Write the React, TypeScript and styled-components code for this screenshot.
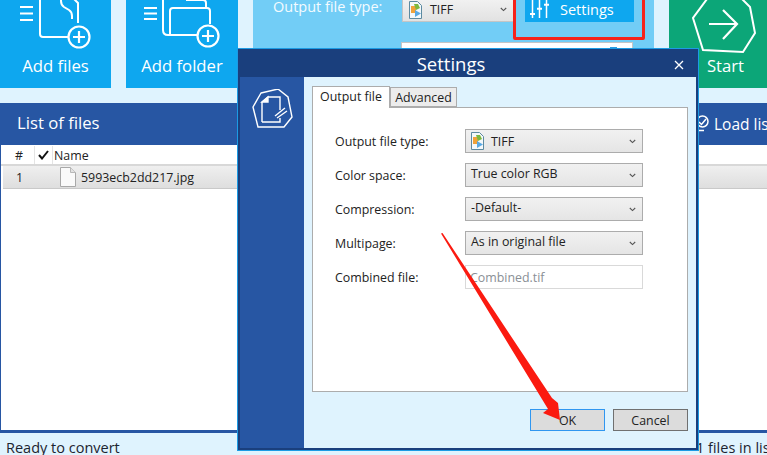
import React from "react";
import styled, { createGlobalStyle } from "styled-components";

const Global = createGlobalStyle`
  html, body { margin: 0; padding: 0; width: 767px; height: 455px; overflow: hidden; background: #dff3fe; }
  * { box-sizing: border-box; }
  body { font-family: "Open Sans", "Noto Sans", "Liberation Sans", sans-serif; }
`;
const Page = styled.div`
  position: relative; width: 767px; height: 455px; overflow: hidden;
  display: flex; flex-direction: column; background: #dff3fe;
`;
const Toolbar = styled.div`display: flex; height: 103px; flex: none;`;
const Tile = styled.div<{ $w: number; $bg: string; $ml: number; $pl?: number }>`
  width: ${p => p.$w}px; margin-left: ${p => p.$ml}px; height: 88px; background: ${p => p.$bg};
  color: #fff; font-size: 16.7px; display: flex; flex-direction: column; align-items: center;
  justify-content: flex-end; padding-bottom: 11px; padding-left: ${p => p.$pl ?? 0}px; position: relative; overflow: hidden;
`;
const TileIcon = styled.svg`position: absolute; left: 0; top: 0;`;
const OutputPanel = styled.div`
  width: 401px; margin-left: 15px; background: #72cdf6; display: flex; flex-direction: column;
  padding-left: 20px; color: #fff; font-size: 14.5px; position: relative;
`;
const OutputRow = styled.div`display: flex; align-items: flex-start; height: 42px;`;
const OutputLabel = styled.div`width: 129px; margin-top: -3px; color: #f4fbff;`;
const TopCombo = styled.div`
  width: 112px; height: 25px; margin-top: -3px; border: 1px solid #c5c5c5; background: linear-gradient(#f2f2f2,#e2e2e2);
  color: #222; font-size: 12.4px; display: flex; align-items: center; padding-left: 6px; gap: 8px;
`;
const Chevron = styled.svg`margin-left: auto; margin-right: 6px; flex: none;`;
const SettingsButton = styled.div`
  width: 109px; height: 26px; margin-top: -4px; margin-left: 11px; background: #0ea7ef; color: #fff; font-size: 14.5px;
  display: flex; align-items: center; padding-left: 5px; gap: 8px;
`;
const WideCombo = styled.div`width: 232px; height: 30px; margin-left: 128px; background: #fff; border: 1px solid #c5c5c5; position: relative;`;
const ComboMark = styled.span`position: absolute; left: 208px; top: 4px; width: 7px; height: 2px; background: #2d9be0;`;
const RedFrame = styled.div`
  position: absolute; left: 260px; top: -3px; width: 132px; height: 43px;
  border: 3px solid #f5231b; border-radius: 2px;
`;
const ListBar = styled.div`
  height: 42px; flex: none; background: #2756a3; color: #fff; display: flex; align-items: center;
  padding: 0 0 3px 17px; font-size: 16.7px; justify-content: space-between;
`;
const LoadList = styled.div`display: flex; align-items: center; gap: 4px; font-size: 15.5px; width: 72px; margin-top: 2px; flex: none; white-space: nowrap; overflow: hidden;`;
const Table = styled.div`
  height: 288px; flex: none; background: #fff; border-left: 1px solid #2756a3; border-bottom: 3px solid #2756a3;
  display: flex; flex-direction: column; padding-top: 1px;
`;
const HeaderRow = styled.div`
  height: 20px; flex: none; display: flex; align-items: center; font-size: 12.4px; color: #222;
  border-bottom: 2px solid #d8d8d8;
`;
const HashCell = styled.div`width: 34px; height: 100%; padding-left: 14px; border-right: 1px solid #e4e4e4; display: flex; align-items: center;`;
const CheckCell = styled.div`width: 18px; height: 100%; padding-left: 3px; border-right: 1px solid #e4e4e4; display: flex; align-items: center;`;
const NameCell = styled.div`padding-left: 1px;`;
const FileRow = styled.div`
  height: 23px; flex: none; margin-left: 2px; background: linear-gradient(#efefef,#dedede);
  border-bottom: 1px solid #c9c9c9; display: flex; align-items: center; font-size: 12.4px; color: #222;
`;
const RowNum = styled.div`width: 57px; padding-left: 13px; flex: none;`;
const RowName = styled.div`margin-left: 5px;`;
const StatusBar = styled.div`
  flex: 1; display: flex; justify-content: space-between; font-size: 14.5px; color: #1c2430;
  padding: 5px 0 0 6px; white-space: nowrap;
`;
const StatusRight = styled.div`width: 71px; overflow: hidden; flex: none;`;

const Dialog = styled.div`
  position: absolute; left: 237px; top: 48px; width: 462px; height: 403px;
  border: 1px solid #1c9be4; background: #1a3f7d; padding: 0 2px 2px;
  display: flex; flex-direction: column;
`;
const DialogTitle = styled.div`
  height: 28px; flex: none; background: #1a3f7d; color: #fff; font-size: 18.5px; position: relative;
  display: flex; align-items: center; justify-content: center; padding: 0 34px 0 0; margin: 0 -2px;
`;
const CloseIcon = styled.svg`position: absolute; right: 14px; top: 11px;`;
const DialogBody = styled.div`flex: 1; display: flex; min-height: 0; background: #dff3fe;`;
const Side = styled.div`width: 64px; flex: none; background: #2756a3; padding: 12px 0 0 11px;`;
const Main = styled.div`flex: 1; padding: 8px 8px 0 8px; display: flex; flex-direction: column;`;
const Tabs = styled.div`display: flex; align-items: flex-end; height: 22px; flex: none; position: relative; z-index: 1;`;
const Tab = styled.div<{ $on?: boolean }>`
  height: ${p => p.$on ? 22 : 20}px; width: ${p => p.$on ? 78 : 67}px; justify-content: center; font-size: 12.4px; color: #222;
  background: ${p => p.$on ? "#fff" : "#ececec"}; border: 1px solid #acacac;
  border-bottom: ${p => p.$on ? "none" : "1px solid #acacac"};
  margin-bottom: ${p => p.$on ? -1 : 0}px; padding-bottom: ${p => p.$on ? 3 : 0}px; display: flex; align-items: center; white-space: nowrap;
`;
const TabPanel = styled.div`
  width: 376px; height: 285px; flex: none; background: #fff; border: 1px solid #acacac;
  padding: 21px 0 0 22px; display: flex; flex-direction: column; gap: 10px;
`;
const FormRow = styled.div`display: flex; align-items: center; height: 24px; font-size: 12.4px; color: #222;`;
const FormLabel = styled.div`width: 130px; flex: none;`;
const Combo = styled.div`
  width: 178px; height: 24px; border: 1px solid #acacac; background: linear-gradient(#f1f1f1,#e5e5e5);
  display: flex; align-items: center; padding-left: 5px; gap: 7px; color: #222; font-size: 12.4px;
`;
const ComboText = styled.span`position: relative; top: -2px;`;
const Field = styled.div`
  width: 178px; height: 24px; border: 1px solid #d9d9d9; background: #fff; color: #8a8f96;
  display: flex; align-items: center; padding-left: 4px; font-size: 12.4px;
`;
const Buttons = styled.div`display: flex; justify-content: flex-end; gap: 8px; margin-top: 17px; width: 376px;`;
const DlgButton = styled.div<{ $focus?: boolean }>`
  width: 75px; height: 22px; background: #dcdcdc; border: 1px solid ${p => p.$focus ? "#2f96f0" : "#707070"};
  font-size: 12.4px; color: #222; display: flex; align-items: center; justify-content: center;
`;
const Arrow = styled.svg`position: absolute; left: 0; top: 0; pointer-events: none;`;

const TiffIcon = () => (
  <svg width="13" height="18" viewBox="0 0 13 18" style={{ flex: "none" }}>
    <path d="M.5.5h8l4 4v13H.5z" fill="#f4f8fa" stroke="#5d8aa0" />
    <path d="M2 5h5v7H2z" fill="#f0a23a" />
    <path d="M5 3h4l2 4-4 2z" fill="#7cb83f" />
    <path d="M6 9l6 3.500L6 16z" fill="#59a9e4" />
  </svg>
);
const ChevronDown = () => (
  <Chevron width="7" height="5" viewBox="0 0 7 5">
    <path d="M.8 1l2.700 2.600L6.200 1" fill="none" stroke="#555" strokeWidth="1.100" />
  </Chevron>
);

export default function App() {
  return (
    <Page>
      <Global />
      <Toolbar>
        <Tile $w={111} $bg="#0ea7ef" $ml={0}>
          <TileIcon width="111" height="88" viewBox="0 0 111 88" fill="none" stroke="#fff" strokeWidth="2">
            <path d="M20 7h13M20 13.500h13M20 20h13" />
            <path d="M40 -6v40q0 3 3 3h25" />
            <path d="M61 -6v7q0 4 3 6l5 3q3 2 3 6v3" />
            <path d="M69 -6l9 9v20" />
            <circle cx="79" cy="37" r="10.500" strokeWidth="2.200" />
            <path d="M79 31v12M73 37h12" strokeWidth="2.200" />
          </TileIcon>
          Add files
        </Tile>
        <Tile $w={112} $bg="#0ea7ef" $ml={15}>
          <TileIcon width="112" height="88" viewBox="0 0 112 88" fill="none" stroke="#fff" strokeWidth="2">
            <path d="M18 8h13M18 13.500h13M18 19h13" />
            <path d="M37 -6v36q0 5 5 5h29" />
            <path d="M44 35V11q0-3 3-3h34q3 0 3 3v13" />
            <path d="M60 0h17q3 0 3 3v5" />
            <circle cx="82" cy="36" r="10.500" strokeWidth="2.200" />
            <path d="M82 30v12M76 36h12" strokeWidth="2.200" />
          </TileIcon>
          Add folder
        </Tile>
        <OutputPanel>
          <OutputRow>
            <OutputLabel>Output file type:</OutputLabel>
            <TopCombo>
              <TiffIcon />
              TIFF
              <ChevronDown />
            </TopCombo>
            <SettingsButton>
              <svg width="22" height="22" viewBox="0 0 22 22" fill="none" stroke="#fff" strokeWidth="1.500" style={{ flex: "none" }}>
                <path d="M2.500 0v20M9.500 0v20M16.500 0v20" />
                <path d="M0 16h5M7 10.700h5M14 6.700h5" strokeWidth="2" />
              </svg>
              Settings
            </SettingsButton>
          </OutputRow>
          <WideCombo><ComboMark /></WideCombo>
          <RedFrame />
        </OutputPanel>
        <Tile $w={98} $bg="#0ca678" $ml={15} $pl={15}>
          <TileIcon width="98" height="88" viewBox="0 0 98 88" fill="none" stroke="#fff" strokeWidth="2">
            <path d="M38 -1L24 18l10 32 40 2 12-19-5-26-9-9" />
            <path d="M40 24h28M54 10l14 14-14 15" strokeWidth="2.200" />
          </TileIcon>
          Start
        </Tile>
      </Toolbar>
      <ListBar>
        List of files
        <LoadList>
          <svg width="15" height="17" viewBox="0 0 15 17" fill="none" stroke="#fff" strokeWidth="1.500" style={{ flex: "none" }}>
            <circle cx="7.500" cy="6.500" r="5.500" />
            <path d="M4 7l2.500 2.500L11 4M1 15.500h8" />
          </svg>
          Load list
        </LoadList>
      </ListBar>
      <Table>
        <HeaderRow>
          <HashCell>#</HashCell>
          <CheckCell>
            <svg width="11" height="10" viewBox="0 0 11 10"><path d="M1 5l3 3.500L10 1" fill="none" stroke="#111" strokeWidth="2" /></svg>
          </CheckCell>
          <NameCell>Name</NameCell>
        </HeaderRow>
        <FileRow>
          <RowNum>1</RowNum>
          <svg width="16" height="20" viewBox="0 0 16 20" style={{ flex: "none" }}>
            <path d="M.5.500h10l5 5v14H.5z" fill="#fafafa" stroke="#a8a8a8" />
            <path d="M10.500.500v5h5" fill="#e2e2e2" stroke="#b8b8b8" />
          </svg>
          <RowName>5993ecb2dd217.jpg</RowName>
        </FileRow>
      </Table>
      <StatusBar>
        Ready to convert
        <StatusRight>1 files in list</StatusRight>
      </StatusBar>
      <Dialog>
        <DialogTitle>
          Settings
          <CloseIcon width="10" height="10" viewBox="0 0 10 10"><path d="M1 1l8 8M9 1l-8 8" stroke="#fff" strokeWidth="1.300" /></CloseIcon>
        </DialogTitle>
        <DialogBody>
          <Side>
            <svg width="42" height="42" viewBox="0 0 42 42" fill="none" stroke="#fff" strokeWidth="1.400">
              <path d="M10 4L27 0l10 8 4 20-8 10H7L2 18z" />
              <path d="M11 33V13l6-5h12v13M29 29v4H11" />
              <path d="M11 13h6V8z" fill="#fff" />
              <path d="M24 27l10-8M26 29l10-7" />
            </svg>
          </Side>
          <Main>
            <Tabs>
              <Tab $on>Output file</Tab>
              <Tab>Advanced</Tab>
            </Tabs>
            <TabPanel>
              <FormRow>
                <FormLabel>Output file type:</FormLabel>
                <Combo><TiffIcon /><span>TIFF</span><ChevronDown /></Combo>
              </FormRow>
              <FormRow>
                <FormLabel>Color space:</FormLabel>
                <Combo><ComboText>True color RGB</ComboText><ChevronDown /></Combo>
              </FormRow>
              <FormRow>
                <FormLabel>Compression:</FormLabel>
                <Combo><ComboText>-Default-</ComboText><ChevronDown /></Combo>
              </FormRow>
              <FormRow>
                <FormLabel>Multipage:</FormLabel>
                <Combo><ComboText>As in original file</ComboText><ChevronDown /></Combo>
              </FormRow>
              <FormRow>
                <FormLabel>Combined file:</FormLabel>
                <Field>Combined.tif</Field>
              </FormRow>
            </TabPanel>
            <Buttons>
              <DlgButton $focus>OK</DlgButton>
              <DlgButton>Cancel</DlgButton>
            </Buttons>
          </Main>
        </DialogBody>
      </Dialog>
      <Arrow width="767" height="455" viewBox="0 0 767 455">
        <path d="M441 233.500L442.500 233L552 398L558 403L560 420L543 413L548 409Z" fill="#fb1a10" />
      </Arrow>
    </Page>
  );
}
